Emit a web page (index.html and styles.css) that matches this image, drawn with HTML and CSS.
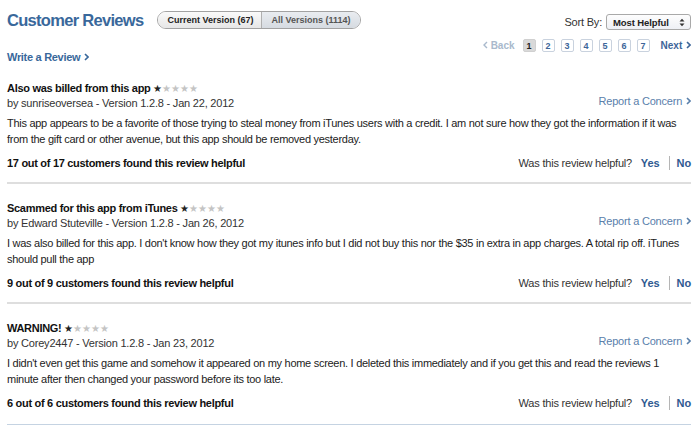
FILE: index.html
```html
<!DOCTYPE html>
<html>
<head>
	<title>Customer Reviews</title>
	<meta name="viewport" content="width=device-width, initial-scale=1">
	<link rel="stylesheet" href="styles.css">
</head>
<body>

<div id="reviews">

	<div class="top">
		<div class="top-left">
			<h1>Customer Reviews</h1>
			<div class="segments">
				<div class="segment selected">Current Version (67)</div>
				<div class="segment">All Versions (1114)</div>
			</div>
		</div>
		<div class="sort">
			<span>Sort By:</span>
			<div class="select">
				<span>Most Helpful</span>
				<svg width="6" height="9" viewBox="0 0 6 9"><path d="M0.5 3.5 L3 0.8 L5.5 3.5 Z M0.5 5.5 L3 8.2 L5.5 5.5 Z" fill="#333"/></svg>
			</div>
		</div>
	</div>

	<div class="second">
		<a class="write">Write a Review <svg class="chev" width="5" height="8" viewBox="0 0 5 8"><path d="M1 1 L4 4 L1 7" fill="none" stroke="currentColor" stroke-width="1.6"/></svg></a>
		<div class="pages">
			<span class="back"><svg class="chev" width="5" height="8" viewBox="0 0 5 8"><path d="M4 1 L1 4 L4 7" fill="none" stroke="currentColor" stroke-width="1.4"/></svg> Back</span>
			<span class="page current">1</span>
			<span class="page">2</span>
			<span class="page">3</span>
			<span class="page">4</span>
			<span class="page">5</span>
			<span class="page">6</span>
			<span class="page">7</span>
			<span class="next">Next <svg class="chev" width="5" height="8" viewBox="0 0 5 8"><path d="M1 1 L4 4 L1 7" fill="none" stroke="currentColor" stroke-width="1.6"/></svg></span>
		</div>
	</div>

	<div class="review">
		<div class="review-head">
			<div>
				<div class="review-title">Also was billed from this app <span class="stars">★<span class="off">★★★★</span></span></div>
				<div class="byline">by sunriseoversea - Version 1.2.8 - Jan 22, 2012</div>
			</div>
			<a class="report">Report a Concern <svg class="chev" width="5" height="8" viewBox="0 0 5 8"><path d="M1 1 L4 4 L1 7" fill="none" stroke="currentColor" stroke-width="1.6"/></svg></a>
		</div>
		<p class="body">This app appears to be a favorite of those trying to steal money from iTunes users with a credit. I am not sure how they got the information if it was from the gift card or other avenue, but this app should be removed yesterday.</p>
		<div class="helpful">
			<b>17 out of 17 customers found this review helpful</b>
			<div class="vote">Was this review helpful? <a class="yes">Yes</a><span class="bar"></span><a>No</a></div>
		</div>
	</div>

	<div class="review">
		<div class="review-head">
			<div>
				<div class="review-title">Scammed for this app from iTunes <span class="stars">★<span class="off">★★★★</span></span></div>
				<div class="byline">by Edward Stuteville - Version 1.2.8 - Jan 26, 2012</div>
			</div>
			<a class="report">Report a Concern <svg class="chev" width="5" height="8" viewBox="0 0 5 8"><path d="M1 1 L4 4 L1 7" fill="none" stroke="currentColor" stroke-width="1.6"/></svg></a>
		</div>
		<p class="body">I was also billed for this app. I don't know how they got my itunes info but I did not buy this nor the $35 in extra in app charges. A total rip off. iTunes should pull the app</p>
		<div class="helpful">
			<b>9 out of 9 customers found this review helpful</b>
			<div class="vote">Was this review helpful? <a class="yes">Yes</a><span class="bar"></span><a>No</a></div>
		</div>
	</div>

	<div class="review last">
		<div class="review-head">
			<div>
				<div class="review-title">WARNING! <span class="stars">★<span class="off">★★★★</span></span></div>
				<div class="byline">by Corey2447 - Version 1.2.8 - Jan 23, 2012</div>
			</div>
			<a class="report">Report a Concern <svg class="chev" width="5" height="8" viewBox="0 0 5 8"><path d="M1 1 L4 4 L1 7" fill="none" stroke="currentColor" stroke-width="1.6"/></svg></a>
		</div>
		<p class="body">I didn't even get this game and somehow it appeared on my home screen. I deleted this immediately and if you get this and read the reviews 1 minute after then changed your password before its too late.</p>
		<div class="helpful">
			<b>6 out of 6 customers found this review helpful</b>
			<div class="vote">Was this review helpful? <a class="yes">Yes</a><span class="bar"></span><a>No</a></div>
		</div>
	</div>

</div>

</body>
</html>
```

FILE: styles.css
```css
* {
	box-sizing: border-box;
}

html, body {
	margin: 0;
	background: #fff;
}

body {
	font-family: "Liberation Sans", Arial, sans-serif;
	font-size: 11px;
	letter-spacing: -0.2px;
	color: #222;
}

a {
	cursor: pointer;
}

b {
	letter-spacing: -0.3px;
}

#reviews {
	width: 700px;
	padding: 0 9px 0 7px;
}

.chev {
	display: inline-block;
	vertical-align: 0;
	margin-left: 1px;
}

/* header */
.top {
	display: flex;
	justify-content: space-between;
	align-items: center;
	height: 40px;
}

.top-left {
	display: flex;
	align-items: center;
}

h1 {
	margin: 0 14px 0 0;
	font-size: 16.5px;
	font-weight: bold;
	color: #39689b;
	letter-spacing: -0.7px;
}

.segments {
	display: flex;
	height: 18px;
	border: 1px solid #a2a2a2;
	border-radius: 9px;
	overflow: hidden;
	font-size: 9px;
	font-weight: bold;
	letter-spacing: 0;
}

.segment {
	display: flex;
	align-items: center;
	padding: 0 9px;
	color: #555;
	background: linear-gradient(#e9ecf0, #d6dbe1);
}

.segment.selected {
	padding: 0 8px 0 9px;
	color: #222;
	background: linear-gradient(#fafafa, #e6e6e6);
	border-right: 1px solid #b0b0b0;
}

.sort {
	display: flex;
	align-items: center;
	margin-top: 4px;
	color: #333;
}

.select {
	display: flex;
	justify-content: space-between;
	align-items: center;
	width: 85px;
	height: 16px;
	margin-left: 4px;
	padding: 0 5px 0 6px;
	border: 1px solid #a9a9a9;
	border-radius: 3px;
	background: linear-gradient(#fdfdfd, #eef0f5);
	font-size: 9.5px;
	font-weight: bold;
	letter-spacing: -0.1px;
	color: #222;
}

/* second row */
.second {
	display: flex;
	justify-content: space-between;
	align-items: flex-start;
	height: 38px;
}

.write {
	margin-top: 11px;
	font-weight: bold;
	letter-spacing: -0.3px;
	color: #39689b;
}

.pages {
	display: flex;
	align-items: center;
	font-size: 10px;
	font-weight: bold;
	letter-spacing: 0;
	margin-top: -1px;
}

.back {
	color: #a9b9cc;
	margin-right: 8px;
}

.page {
	display: flex;
	justify-content: center;
	align-items: center;
	width: 13px;
	height: 13px;
	margin-right: 6px;
	border: 1px solid #c9d2de;
	border-radius: 2px;
	color: #3d6699;
	font-size: 9px;
}

.page.current {
	background: #d9d9d9;
	border-color: #d0d0d0;
	color: #222;
}

.next {
	margin-left: 5px;
	color: #3d6699;
}

/* reviews */
.review {
	padding: 3px 0 11px;
	border-bottom: 2px solid #dedede;
}

.review + .review {
	padding-top: 17px;
}

.review.last {
	border-bottom: 1px solid #c5d3e2;
	padding-bottom: 13px;
}

.review-head {
	display: flex;
	justify-content: space-between;
	align-items: flex-end;
	line-height: 14px;
}

.review-title {
	font-weight: bold;
	letter-spacing: -0.3px;
	color: #111;
}

.stars {
	font-size: 10px;
	font-weight: normal;
	color: #222;
	letter-spacing: 0;
}

.stars .off {
	color: #c4c4c4;
}

.byline {
	color: #333;
}

.report {
	color: #5a80ab;
	margin-bottom: 2px;
}

.body {
	margin: 5px 0 8px;
	line-height: 16px;
	letter-spacing: -0.28px;
	color: #222;
}

.helpful {
	display: flex;
	justify-content: space-between;
	align-items: center;
	line-height: 16px;
}

.helpful b {
	color: #111;
}

.vote {
	display: flex;
	align-items: center;
	color: #333;
	white-space: pre;
}

.vote a {
	font-weight: bold;
	letter-spacing: -0.1px;
	color: #2f5a91;
}

.vote .yes {
	margin-left: 6px;
}

.bar {
	display: inline-block;
	width: 1px;
	height: 14px;
	margin: 0 7px 0 9px;
	background: #b5b5b5;
}
```
